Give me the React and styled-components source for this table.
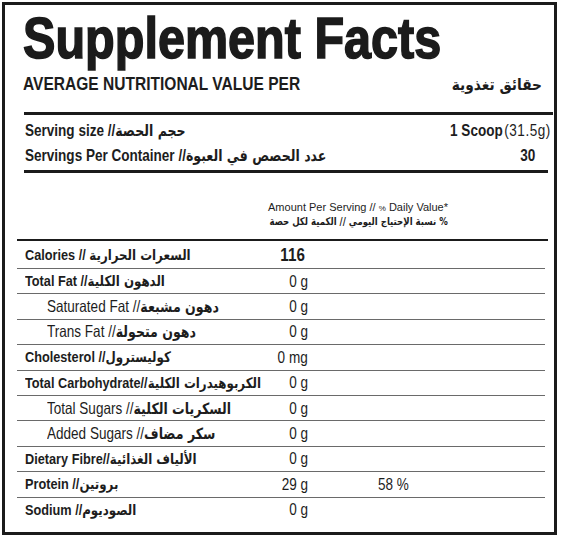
import styled, { createGlobalStyle } from "styled-components";

const GlobalStyle = createGlobalStyle`
  html, body {
    margin: 0;
    padding: 0;
    background: #ffffff;
  }
  body {
    font-family: "Liberation Sans", "DejaVu Sans", sans-serif;
    color: #1d1d1d;
  }
`;

const nutrients = [
  { en: "Calories // ", ar: "السعرات الحرارية", amount: "116", big: true },
  { en: "Total Fat //", ar: "الدهون الكلية", amount: "0 g" },
  { en: "Saturated Fat //", ar: "دهون مشبعة", amount: "0 g", sub: true },
  { en: "Trans Fat //", ar: "دهون متحولة", amount: "0 g", sub: true },
  { en: "Cholesterol //", ar: "كوليسترول", amount: "0 mg" },
  { en: "Total Carbohydrate//", ar: "الكربوهيدرات الكلية", amount: "0 g" },
  { en: "Total Sugars //", ar: "السكريات الكلية", amount: "0 g", sub: true },
  { en: "Added Sugars //", ar: "سكر مضاف", amount: "0 g", sub: true },
  { en: "Dietary Fibre//", ar: "الألياف الغذائية", amount: "0 g" },
  { en: "Protein //", ar: "بروتين", amount: "29 g", dv: "58 %" },
  { en: "Sodium //", ar: "الصوديوم", amount: "0 g", last: true },
];

const App = () => {
  return (
    <>
      <GlobalStyle />
      <Label>
        <Title>
          <Narrow $scale={0.852}>Supplement Facts</Narrow>
        </Title>
        <SubHeader>
          <Narrow $scale={0.84}>AVERAGE NUTRITIONAL VALUE PER</Narrow>
          <SubArabic>
            <Narrow $scale={0.86} $origin="right">
              حقائق تغذوية
            </Narrow>
          </SubArabic>
        </SubHeader>

        <Rule $thick={3} $left={19} $right={1} $top={17} />

        <ServingBlock>
          <ServingRow>
            <Narrow>
              Serving size //<Ar>حجم الحصة</Ar>
            </Narrow>
            <Narrow $origin="right">
              1 Scoop<Grams>(31.5g)</Grams>
            </Narrow>
          </ServingRow>
          <ServingRow>
            <Narrow>
              Servings Per Container //<Ar>عدد الحصص في العبوة</Ar>
            </Narrow>
            <ServingValue $inset={16}>
              <Narrow $origin="right">30</Narrow>
            </ServingValue>
          </ServingRow>
        </ServingBlock>

        <Rule $thick={3} $left={19} $right={6} $top={2} />

        <AmountHead>
          <div>
            Amount Per Serving // <Small>%</Small> Daily Value*
          </div>
          <ArabicLine>
            <Narrow $scale={0.815} $origin="right" dir="rtl">
              % نسبة الإحتياج اليومي // الكمية لكل حصة
            </Narrow>
          </ArabicLine>
        </AmountHead>

        <Rule $thick={2} $left={12} $right={6} $top={11} />

        <Table>
          {nutrients.map((n) => (
            <Row key={n.en} $big={n.big} $last={n.last}>
              <Name $sub={n.sub}>
                <Narrow>
                  {n.en}
                  <Ar>{n.ar}</Ar>
                </Narrow>
              </Name>
              <Amount $big={n.big}>
                <Narrow $origin="right">{n.amount}</Narrow>
              </Amount>
              <Daily>{n.dv && <Narrow>{n.dv}</Narrow>}</Daily>
            </Row>
          ))}
        </Table>
      </Label>
    </>
  );
};

export default App;

const Label = styled.div`
  box-sizing: border-box;
  margin: 2px;
  width: 555px;
  height: 533px;
  border: 3px solid #1b1b1b;
  display: flex;
  flex-direction: column;
`;

const Narrow = styled.span`
  display: inline-block;
  white-space: nowrap;
  transform: scaleX(${(p) => p.$scale || 0.82});
  transform-origin: ${(p) => p.$origin || "left"} center;
`;

const Title = styled.h1`
  margin: 5px 0 0 18px;
  font-size: 57px;
  line-height: 57px;
  font-weight: 700;
  -webkit-text-stroke: 1.6px #1b1b1b;
  color: #1b1b1b;
  white-space: nowrap;
`;

const SubHeader = styled.div`
  margin: 7px 12px 0 18px;
  display: flex;
  justify-content: space-between;
  align-items: baseline;
  font-size: 18.5px;
  line-height: 20px;
  font-weight: 700;
`;

const SubArabic = styled.span`
  font-family: "DejaVu Sans", sans-serif;
  font-size: 16px;
  font-weight: 700;
`;

const Rule = styled.div`
  height: ${(p) => p.$thick}px;
  margin: ${(p) => p.$top}px ${(p) => p.$right}px 0 ${(p) => p.$left}px;
  background: #1b1b1b;
  flex-shrink: 0;
`;

const ServingBlock = styled.div`
  margin: 3px 3px 0 20px;
`;

const ServingRow = styled.div`
  display: flex;
  justify-content: space-between;
  height: 25px;
  line-height: 25px;
  font-size: 16.5px;
  font-weight: 700;
  white-space: nowrap;
`;

const ServingValue = styled.span`
  margin-right: ${(p) => p.$inset || 0}px;
`;

const Grams = styled.span`
  font-weight: 400;
  margin-left: 2px;
  letter-spacing: 0.6px;
`;

const Ar = styled.span`
  font-family: "DejaVu Sans", sans-serif;
  font-weight: 700;
  font-size: 0.93em;
`;

const AmountHead = styled.div`
  margin: 28px 106px 0 0;
  align-self: flex-end;
  font-size: 11px;
  line-height: 13px;
  text-align: right;
`;

const ArabicLine = styled.div`
  font-family: "DejaVu Sans", sans-serif;
  font-weight: 700;
  font-size: 10.5px;
`;

const Small = styled.span`
  font-size: 8px;
`;

const Table = styled.div`
  margin: 0 9px 0 12px;
`;

const Row = styled.div`
  display: grid;
  grid-template-columns: 241px 50px 1fr;
  align-items: center;
  height: ${(p) => (p.$big ? "27px" : "24.4px")};
  border-bottom: ${(p) => (p.$last ? "none" : "1px solid #6a6a6a")};
  white-space: nowrap;
`;

const Name = styled.div`
  padding-left: ${(p) => (p.$sub ? "30px" : "8px")};
  font-size: ${(p) => (p.$sub ? "16.5px" : "15.5px")};
  font-weight: ${(p) => (p.$sub ? 400 : 700)};
`;

const Amount = styled.div`
  text-align: right;
  font-size: ${(p) => (p.$big ? "18.5px" : "16.5px")};
  font-weight: ${(p) => (p.$big ? 700 : 400)};
  padding-right: ${(p) => (p.$big ? "3px" : "0")};
`;

const Daily = styled.div`
  padding-left: 70px;
  font-size: 16.5px;
`;
